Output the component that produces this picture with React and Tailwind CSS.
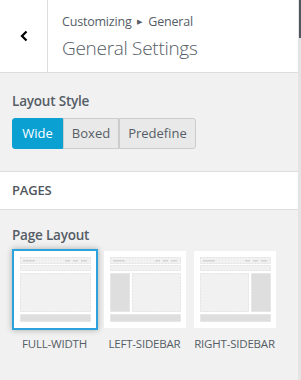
import React from "react";

const font = { fontFamily: '"Open Sans", "Noto Sans", sans-serif' };

// Page layout thumbnail drawing
const LayoutThumb = ({ type }) => {
  const dash = "#e2e2e2";
  return (
    <svg width="82" height="77" viewBox="0 0 82 77">
      <rect x="0" y="0" width="82" height="77" fill="#fff" />
      {/* header */}
      <rect x="6.5" y="6.5" width="70" height="6" fill="#f1f1f1" stroke={dash} strokeDasharray="2 1" />
      <rect x="9" y="9" width="12" height="1.5" fill="#d4d4d4" />
      <rect x="51" y="9" width="5" height="1.5" fill="#d4d4d4" />
      <rect x="59" y="9" width="5" height="1.5" fill="#d4d4d4" />
      <rect x="67" y="9" width="6" height="1.5" fill="#d4d4d4" />
      {/* nav */}
      <rect x="6.5" y="14.5" width="70" height="5" fill="#f1f1f1" stroke={dash} strokeDasharray="2 1" />
      {/* main */}
      {type === "full" && (
        <rect x="6.5" y="22.5" width="70" height="38" fill="#f1f1f1" stroke={dash} strokeDasharray="2 1" />
      )}
      {type === "left" && (
        <>
          <rect x="6.5" y="22.5" width="19" height="38" fill="#dedede" stroke={dash} strokeDasharray="2 1" />
          <rect x="28.5" y="22.5" width="48" height="38" fill="#f1f1f1" stroke={dash} strokeDasharray="2 1" />
        </>
      )}
      {type === "right" && (
        <>
          <rect x="6.5" y="22.5" width="48" height="38" fill="#f1f1f1" stroke={dash} strokeDasharray="2 1" />
          <rect x="57.5" y="22.5" width="19" height="38" fill="#dedede" stroke={dash} strokeDasharray="2 1" />
        </>
      )}
      {/* footer */}
      <rect x="6.5" y="63.5" width="70" height="7" fill="#dedede" stroke={dash} strokeDasharray="2 1" />
    </svg>
  );
};

const layouts = [
  { id: "full", label: "FULL-WIDTH" },
  { id: "left", label: "LEFT-SIDEBAR" },
  { id: "right", label: "RIGHT-SIDEBAR" },
];

export default function App() {
  const [style, setStyle] = React.useState("Wide");
  const [layout, setLayout] = React.useState("full");
  const styles = ["Wide", "Boxed", "Predefine"];

  return (
    <div className="flex w-[301px] h-[380px] bg-[#f1f1f1] overflow-hidden" style={font}>
      <div className="w-[298px] flex flex-col">
        {/* Header */}
        <div className="flex h-[73px] bg-white border-b border-[#dddddd]">
          <div className="w-[48px] border-r border-[#dddddd] flex items-center justify-center">
            <svg width="10" height="12" viewBox="0 0 10 12">
              <path d="M7.5 1.5 L3 6 L7.5 10.5" fill="none" stroke="#000" strokeWidth="2.2" />
            </svg>
          </div>
          <div className="pl-[14px] pt-[13px] text-[#555d66]">
            <div className="text-[12.5px] leading-[17px] tracking-[-0.2px] flex items-center">
              <span>Customizing</span>
              <span className="text-[7px] mx-[6px]">▶</span>
              <span>General</span>
            </div>
            <div className="text-[19px] leading-[28px] font-light mt-[4px] tracking-[-0.3px]">
              General Settings
            </div>
          </div>
        </div>

        {/* Layout style */}
        <div className="px-3 pt-[19px]">
          <div className="text-[13.5px] font-semibold text-[#555d66] leading-[18px] tracking-[-0.2px]">
            Layout Style
          </div>
          <div className="flex mt-[8px]">
            {styles.map((s, i) => (
              <button
                key={s}
                onClick={() => setStyle(s)}
                className={`h-[31px] text-[13px] border ${
                  style === s
                    ? "bg-[#0aa0d2] border-[#0aa0d2] text-white"
                    : "bg-[#e9e9e9] border-[#cccccc] text-[#555d66]"
                } ${i === 0 ? "w-[51px] rounded-l-[3px]" : ""} ${i === 1 ? "w-[56px]" : ""} ${
                  i === 2 ? "w-[77px] rounded-r-[3px]" : ""
                }`}
              >
                {s}
              </button>
            ))}
          </div>
        </div>

        {/* Pages section */}
        <div className="mt-[22px] h-[39px] bg-white border-y border-[#dddddd] px-3 flex items-center">
          <span className="text-[13px] font-semibold text-[#50575e] tracking-[-0.2px]">PAGES</span>
        </div>

        {/* Page layout */}
        <div className="px-3 pt-[16px]">
          <div className="text-[13.5px] font-semibold text-[#555d66] leading-[18px] tracking-[-0.2px]">
            Page Layout
          </div>
          <div className="flex mt-[5px] gap-[5px]">
            {layouts.map((l) => (
              <div key={l.id} className="flex flex-col items-center w-[85px]" onClick={() => setLayout(l.id)}>
                <div
                  className={`${
                    layout === l.id
                      ? "border-2 border-[#2ea2dc] shadow-[0_0_6px_rgba(0,0,0,0.3)]"
                      : "border-2 border-transparent"
                  }`}
                >
                  <LayoutThumb type={l.id} />
                </div>
                <div className="text-[11.5px] text-[#555d66] mt-[5px] tracking-[-0.2px]">{l.label}</div>
              </div>
            ))}
          </div>
        </div>
      </div>

      {/* Scrollbar */}
      <div className="w-[3px] bg-[#e4e4e4] flex flex-col">
        <div className="h-[38px] w-[2px] ml-[1px] bg-[#50575e]" />
      </div>
    </div>
  );
}
